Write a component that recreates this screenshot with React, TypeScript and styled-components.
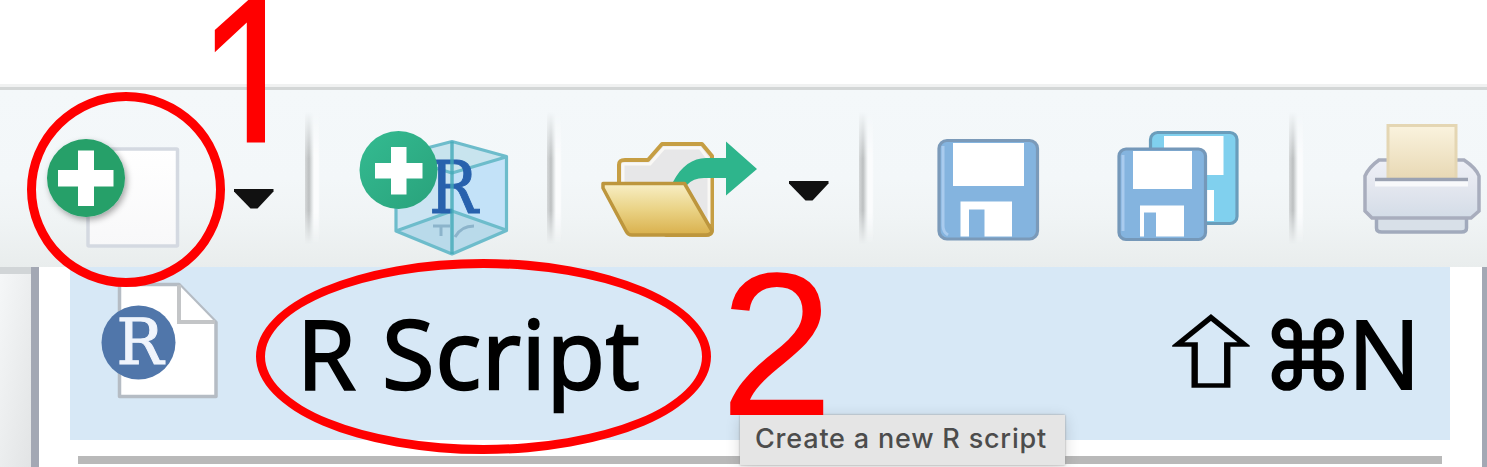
import React from "react";
import styled, { createGlobalStyle } from "styled-components";

const GlobalStyle = createGlobalStyle`
  * { box-sizing: border-box; }
  body { margin: 0; background: #fff; overflow: hidden; }
`;

const Window = styled.div`
  position: relative;
  display: flex;
  flex-direction: column;
  width: 1487px;
  height: 467px;
  overflow: hidden;
  background: #fff;
  font-family: "Open Sans", "Noto Sans", sans-serif;
`;

const TitleBar = styled.div`
  flex: none;
  height: 87px;
  background: #fff;
  border-bottom: 3px solid #f0f1f1;
`;

const Toolbar = styled.div`
  flex: none;
  display: flex;
  height: 180px;
  padding-left: 40px;
  border-top: 3px solid #d3d6d6;
  background: linear-gradient(#f4f8fa 0%, #f3f7f9 50%, #f0f4f5 72%, #e9eded 100%);
`;

const ToolIcon = styled.svg<{ $before?: number }>`
  flex: none;
  display: block;
  height: 177px;
  margin-left: ${(p) => p.$before ?? 0}px;
`;

const Divider = styled.div<{ $before: number }>`
  flex: none;
  width: 15px;
  height: 132px;
  margin: 22px 0 0 ${(p) => p.$before}px;
  background: linear-gradient(90deg, #d5d8d9 0, #bcbfc0 4px, #e3e6e7 7px, #fbfcfd 9px, #fbfcfd 13px, #f4f7f900 15px);
  mask-image: linear-gradient(transparent, #000 35%, #000 75%, transparent);
`;

const Body = styled.div`
  flex: 1;
  display: flex;
  min-height: 0;
`;

const Pane = styled.div`
  width: 31px;
  border-top: 7px solid #d1d5d7;
  background: linear-gradient(100deg, #f5f7f8, #e2e4e5);
`;

const Menu = styled.div`
  flex: 1;
  display: flex;
  flex-direction: column;
  padding: 0 32px 0 31px;
  border-left: 8px solid #a3a8b4;
  border-right: 5px solid #a3a8b4;
  background: #fff;
`;

const MenuItem = styled.div`
  flex: none;
  display: flex;
  align-items: center;
  height: 173px;
  padding: 0 30px 0 25px;
  background: #d7e8f6;
  color: #000;
`;

const FileIcon = styled.svg`
  flex: none;
  width: 130px;
  height: 173px;
`;

const Label = styled.span`
  flex: 1;
  margin: 0 0 4px 72px;
  font-size: 95px;
  line-height: 130px;
  letter-spacing: 1px;
  white-space: pre;
  -webkit-text-stroke: 2.4px #000;
`;

const Shortcut = styled.span`
  display: flex;
  align-items: center;
`;

const Key = styled.span<{ $width: number; $family: string; $lift?: number; $stroke: number; $shape?: string }>`
  width: ${(p) => p.$width}px;
  margin-bottom: ${(p) => p.$lift ?? 0}px;
  text-align: center;
  font-family: "${(p) => p.$family}", sans-serif;
  font-size: 96px;
  line-height: 130px;
  transform: ${(p) => p.$shape ?? "none"};
  -webkit-text-stroke: ${(p) => p.$stroke}px #000;
`;

const Separator = styled.div`
  flex: none;
  height: 8px;
  margin: 16px 8px 0;
  background: #b9b9b9;
`;

const Tooltip = styled.div`
  position: absolute;
  left: 740px;
  top: 415px;
  width: 325px;
  height: 50px;
  padding-left: 15px;
  background: #e5e5e5;
  box-shadow: 0 0 2px #999, 0 3px 14px rgba(0, 0, 0, 0.16);
  color: #4c4c4c;
  font: 500 27px/48px Inter, sans-serif;
  letter-spacing: 0.8px;
  white-space: nowrap;
`;

const Ring = styled.div<{ $x: number; $y: number; $w: number; $h: number }>`
  position: absolute;
  left: ${(p) => p.$x}px;
  top: ${(p) => p.$y}px;
  width: ${(p) => p.$w}px;
  height: ${(p) => p.$h}px;
  border: 9.5px solid #f00;
  border-radius: 50%;
`;

const StepNumber = styled.div<{ $x: number; $y: number; $size: number; $tall?: boolean }>`
  position: absolute;
  left: ${(p) => p.$x}px;
  top: ${(p) => p.$y}px;
  color: #f00;
  font: ${(p) => p.$size}px/1 "Liberation Sans", Arial, sans-serif;
  ${(p) =>
    p.$tall &&
    `
    transform: scaleY(1.3);
    transform-origin: top;
    clip-path: inset(0 0 64px 0);
  `}
`;

const Caret = ({ x, y, before }: { x: number; y: number; before: number }) => (
  <ToolIcon $before={before} width={40} viewBox={`${x} 90 40 177`}>
    <path d={`M${x} ${y}h39.5v2.500l-16 17h-7l-16.5-17z`} fill="#111" />
  </ToolIcon>
);

const NewFileIcon = () => (
  <ToolIcon width={150} viewBox="40 90 150 177">
    <defs>
      <filter id="badgeShadow" x="-20%" y="-20%" width="150%" height="150%">
        <feDropShadow dx="2" dy="3" stdDeviation="3" floodOpacity="0.35" />
      </filter>
      <linearGradient id="paper" x2="0" y2="1">
        <stop stopColor="#fff" />
        <stop offset="1" stopColor="#f8f8f9" />
      </linearGradient>
    </defs>
    <rect x="88" y="149" width="89.5" height="97" rx="1" fill="url(#paper)" stroke="#d4d9e1" strokeWidth="3.5" />
    <circle cx="86" cy="178" r="39" fill="#26a069" filter="url(#badgeShadow)" />
    <path d="M78 150.500h16v19.500h19.500v16.500h-19.500v19.500h-16v-19.500h-20v-16.500h20z" fill="#fff" />
  </ToolIcon>
);

const NewProjectIcon = () => (
  <ToolIcon $before={35} width={160} viewBox="355 90 160 177">
    <defs>
      <linearGradient id="badge" x2="1" y2="1">
        <stop stopColor="#34bb91" />
        <stop offset="1" stopColor="#29a27b" />
      </linearGradient>
    </defs>
    <path d="M396 156L452 141.500L506.500 156.500V230.500L452 254L396 231z" fill="#cbe4f2" />
    <path d="M452 173L506 157V230L452 212z" fill="#c3e2f8" />
    <path d="M396 156L452 141.500L506.500 156.500L452 173z" fill="#c8e4ee" />
    <path d="M396 231L452 211L506 231L452 254z" fill="#b9daea" />
    <path d="M433 226h17M441 226v10M455 237q6-11 19-11" fill="none" stroke="#8cb4cb" strokeWidth="3" />
    <path d="M396 156L452 141.500L506.500 156.500V230.500L452 254L396 231zM396 156L452 173L506 157M396 231L452 211L506 230" fill="none" stroke="#6dbccb" strokeWidth="3.200" strokeLinejoin="round" />
    <text x="429" y="213" fontFamily="DejaVu Serif, serif" fontSize="73" fill="#2861ad" stroke="#2861ad" strokeWidth="1" textLength="49" lengthAdjust="spacingAndGlyphs">R</text>
    <path d="M452 141.500V254" stroke="#42aab8" strokeWidth="3.500" opacity=".8" />
    <circle cx="398.500" cy="170" r="39" fill="url(#badge)" />
    <path d="M391 147h15.500v16h16v15.500h-16v16h-15.500v-16h-16v-15.500h16z" fill="#fff" />
  </ToolIcon>
);

const OpenIcon = () => (
  <ToolIcon $before={33} width={165} viewBox="595 90 165 177">
    <defs>
      <linearGradient id="folder" x2="0" y2="1">
        <stop stopColor="#f8efc6" />
        <stop offset=".5" stopColor="#ead386" />
        <stop offset="1" stopColor="#d9b04c" />
      </linearGradient>
    </defs>
    <path d="M619 184V165q0-5 6-5h23l14-16h40l10 12V230q0 5-6 5h-40z" fill="#e7e7e8" stroke="#c69e43" strokeWidth="4" strokeLinejoin="round" />
    <path d="M623 182V164h27l14-16h36l9 12v64" fill="none" stroke="#f9f8f5" strokeWidth="3" />
    <path d="M673 182C681 166 693 158 706 158h20v-16.500L757 169l-31 26.500V178h-22q-11 0-17 7z" fill="#2eb58c" />
    <path d="M603 183.500h81.500L712 231q-1 4-6 4h-74q-4 0-6-4l-23-43z" fill="url(#folder)" stroke="#bd963d" strokeWidth="3.500" strokeLinejoin="round" />
  </ToolIcon>
);

const SaveIcon = () => (
  <ToolIcon $before={59} width={112} viewBox="933 90 112 177">
    <rect x="939" y="140.500" width="98.500" height="98.500" rx="8" fill="#84b4df" stroke="#7b9ab9" strokeWidth="3.200" />
    <path d="M943 146v80q0 6 5 9" fill="none" stroke="#a9cbee" strokeWidth="3" />
    <path d="M953 143h71v43h-71zM960.500 201.500H1012v35H984.500v-27h-15.500v27h-8.500z" fill="#fff" />
  </ToolIcon>
);

const SaveAllIcon = () => (
  <ToolIcon $before={65} width={135} viewBox="1110 90 135 177">
    <rect x="1150.500" y="132.500" width="86.500" height="91" rx="7" fill="#80d0ee" stroke="#6a9dbb" strokeWidth="3.200" />
    <path d="M1164 136h59.500v39h-59.500zM1170 190h44v31h-44z" fill="#fff" />
    <rect x="1119" y="149" width="86.500" height="90.500" rx="7" fill="#84b4df" stroke="#7598b9" strokeWidth="3.200" />
    <path d="M1123 155v76" stroke="#a9cbee" strokeWidth="3" />
    <path d="M1133 151h59v38h-59zM1140 205.500h44v31h-28v-24h-12v24h-4z" fill="#fff" />
  </ToolIcon>
);

const PrintIcon = () => (
  <ToolIcon $before={56} width={127} viewBox="1360 90 127 177">
    <defs>
      <linearGradient id="printer" x2="0" y2="1">
        <stop stopColor="#eef0f7" />
        <stop offset=".45" stopColor="#e4e7ef" />
        <stop offset="1" stopColor="#d3dce7" />
      </linearGradient>
      <linearGradient id="sheet" x2="0" y2="1">
        <stop stopColor="#faf3de" />
        <stop offset="1" stopColor="#e8d8b4" />
      </linearGradient>
    </defs>
    <path d="M1376.500 216h90v12q0 4-5 4h-80q-5 0-5-4z" fill="#d8e0e8" stroke="#a1aabc" strokeWidth="3.500" />
    <path d="M1379 160h85q12 8 15 16v35l-8 7h-99l-7-7v-35q4-9 14-16z" fill="url(#printer)" stroke="#a8adbd" strokeWidth="3.500" />
    <path d="M1388 125.500h68V179h-68z" fill="url(#sheet)" stroke="#e4d6b3" strokeWidth="3" />
    <path d="M1375 179.500h93" stroke="#9ba2b2" strokeWidth="3.500" />
    <path d="M1375 184h93" stroke="#f8f9fb" strokeWidth="5" />
  </ToolIcon>
);

const RScriptIcon = () => (
  <FileIcon viewBox="95 267 130 173">
    <path d="M119.500 284.500H179l37 38v74H119.500z" fill="#fff" stroke="#b5bcc4" strokeWidth="3.500" strokeLinejoin="round" />
    <path d="M179 285v37h36" fill="#fff" stroke="#c3c5c7" strokeWidth="4" />
    <circle cx="138.500" cy="342.500" r="37" fill="#5076aa" />
    <text x="116.500" y="364" fontFamily="DejaVu Serif, serif" fontSize="63" fill="#eff4fc" stroke="#eff4fc" strokeWidth="1" textLength="47" lengthAdjust="spacingAndGlyphs">R</text>
  </FileIcon>
);

export default function App() {
  return (
    <Window>
      <GlobalStyle />
      <TitleBar />
      <Toolbar>
        <NewFileIcon />
        <Caret x={234} y={189} before={44} />
        <Divider $before={31} />
        <NewProjectIcon />
        <Divider $before={32} />
        <OpenIcon />
        <Caret x={789} y={181} before={29} />
        <Divider $before={30} />
        <SaveIcon />
        <SaveAllIcon />
        <Divider $before={44} />
        <PrintIcon />
      </Toolbar>
      <Body>
        <Pane />
        <Menu>
          <MenuItem>
            <RScriptIcon />
            <Label>R Script</Label>
            <Shortcut>
              <Key $width={98} $family="Noto Sans CJK JP" $stroke={2} $shape="translateY(-6px) scale(1.15, 0.81)">⇧</Key>
              <Key $width={88} $family="DejaVu Sans" $lift={-7} $stroke={1.8} $shape="translateY(1px) scale(0.97)">⌘</Key>
              <Key $width={72} $family="Open Sans" $lift={4} $stroke={2}>N</Key>
            </Shortcut>
          </MenuItem>
          <Separator />
        </Menu>
      </Body>
      <Tooltip>Create a new R script</Tooltip>
      <Ring $x={27} $y={91.5} $w={198} $h={195} />
      <Ring $x={256} $y={258.5} $w={455} $h={195} />
      <StepNumber $x={195} $y={-42} $size={206} $tall>1</StepNumber>
      <StepNumber $x={720} $y={241.5} $size={204}>2</StepNumber>
    </Window>
  );
}
